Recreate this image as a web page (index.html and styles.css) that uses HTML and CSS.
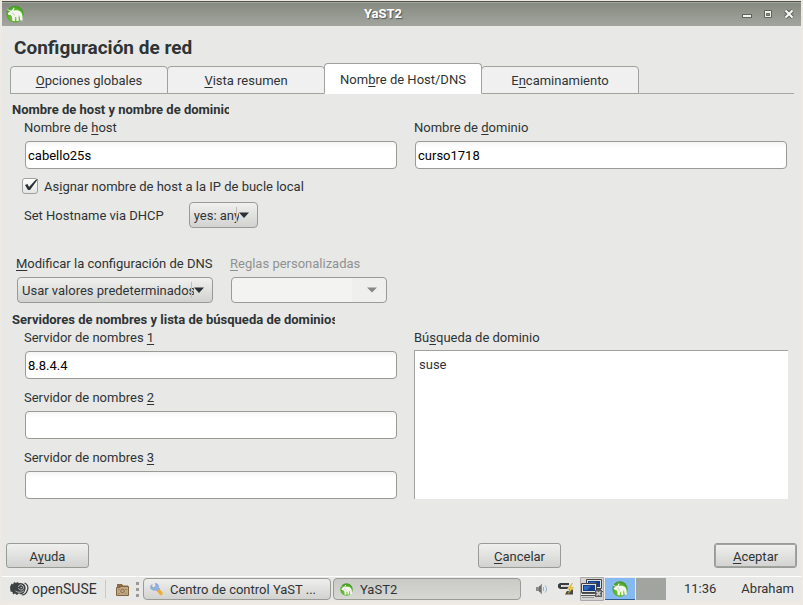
FILE: index.html
```
<!DOCTYPE html>
<html lang="es">
<head>
<meta charset="utf-8">
<title>YaST2</title>
<link rel="stylesheet" href="styles.css">
</head>
<body>
<svg class="defs" aria-hidden="true">
  <defs>
    <radialGradient id="green" cx="50%" cy="60%" r="55%">
      <stop offset="0" stop-color="#8fdc3c"/><stop offset=".65" stop-color="#5cb82a"/><stop offset="1" stop-color="#479a2b"/>
    </radialGradient>
    <symbol id="yast" viewBox="0 0 18 18">
      <circle cx="9" cy="9" r="8.600" fill="url(#green)"/>
      <path d="M1.500 4 4 5.500 6 5.300 7.600 2.500l.9.6-.9 2.600c2.500-.8 5.700-.5 7.600 1.500 1.200 1.500 1.500 4.500 1.300 8.300h-2.300l-.6-4-.9.200.1 4.300h-2.300l-.6-4-.9.100-.1 4H6.400L6 11.400 4.700 10 2.300 9.700 1.800 8l2.500-1.600L1.500 5z" fill="#f4f6ee"/>
      <path d="M6.500 7.500c.5 1.500 1.500 2.500 2.500 3M13 10.500v3M10 12.200v2" stroke="#a5b494" stroke-width=".7" fill="none"/>
    </symbol>
    <symbol id="pc" viewBox="0 0 17 13">
      <path d="M.5.500h15v9H.5z" fill="#e0e2e2" stroke="#444"/>
      <path d="M2 2h12v6H2z" fill="#153e88"/><path d="M3 3h7l-4 4H3z" fill="#2e69bd"/>
      <path d="M1 10.500h14M0 12.500h17" stroke="#555"/><path d="M0 11.500h17" stroke="#e8e8e8"/>
    </symbol>
  </defs>
</svg>
<div class="window">
  <header class="titlebar">
    <svg class="title-icon" aria-hidden="true"><use href="#yast"/></svg>
    <span class="title">YaST2</span>
    <div class="window-controls">
      <button type="button" aria-label="Minimizar"><svg width="10" height="10"><rect x=".5" y="5.500" width="9" height="3" fill="#f4f4f2" stroke="#5f635b"/></svg></button>
      <button type="button" aria-label="Maximizar"><svg width="10" height="10"><path d="M1.500 1.500h7v7h-7z" fill="#efefec" stroke="#5f635b"/><path d="M3.500 4.500h3v2h-3z" fill="#999c94" stroke="#5f635b"/></svg></button>
      <button type="button" aria-label="Cerrar"><svg width="10" height="10"><path d="m1.500 1.500 7 7m0-7-7 7" stroke="#5f635b" stroke-width="4"/><path d="m1.500 1.500 7 7m0-7-7 7" stroke="#fafaf8" stroke-width="2"/></svg></button>
    </div>
  </header>

  <main class="content">
    <h1>Configuración de red</h1>
    <nav class="tabs" role="tablist">
      <button type="button" role="tab"><span><u>O</u>pciones globales</span></button>
      <button type="button" role="tab"><span><u>V</u>ista resumen</span></button>
      <button type="button" role="tab" class="active" aria-selected="true"><span>Nom<u>b</u>re de Host/DNS</span></button>
      <button type="button" role="tab"><span>E<u>n</u>caminamiento</span></button>
    </nav>

    <section class="group">
      <h2 class="host-heading">Nombre de host y nombre de dominio</h2>
      <div class="columns">
        <div class="field">
          <label for="host">Nombre de <u>h</u>ost</label>
          <input id="host" type="text" value="cabello25s">
        </div>
        <div class="field">
          <label for="domain">Nombre de <u>d</u>ominio</label>
          <input id="domain" type="text" value="curso1718">
        </div>
      </div>
      <div class="check-row">
        <span class="check">
          <input id="loopback" type="checkbox" checked>
          <svg viewBox="0 0 16 16" aria-hidden="true"><path d="M3 7 5.500 6 7 9 13.500 2 16 1 8 12 6 12z" fill="#2b3134"/></svg>
        </span>
        <label for="loopback">As<u>i</u>gnar nombre de host a la IP de bucle local</label>
      </div>
      <div class="dhcp-row">
        <label for="dhcp">Set Hostname via DHCP</label>
        <span class="combo dhcp">
          <select id="dhcp"><option>yes: any</option></select>
          <svg viewBox="0 0 22 24" aria-hidden="true"><path d="M.5 4v16" stroke="#bdbdbb"/><path d="M3 9.500h10L8 15z" fill="#2b3134"/></svg>
        </span>
      </div>
    </section>

    <section class="dns-row">
      <div class="field">
        <label for="policy"><u>M</u>odificar la configuración de DNS</label>
        <span class="combo">
          <select id="policy"><option>Usar valores predeterminados</option></select>
          <svg viewBox="0 0 22 24" aria-hidden="true"><path d="M.5 4v16" stroke="#bdbdbb"/><path d="M3 9.500h10L8 15z" fill="#2b3134"/></svg>
        </span>
      </div>
      <div class="field disabled">
        <label for="rules"><u>R</u>eglas personalizadas</label>
        <span class="combo rules">
          <select id="rules" disabled><option></option></select>
          <svg viewBox="0 0 22 24" aria-hidden="true"><path d="M2 9.500h10L7 14.500z" fill="#858987"/></svg>
        </span>
      </div>
    </section>

    <section class="group">
      <h2 class="servers-heading">Servidores de nombres y lista de búsqueda de dominios</h2>
      <div class="columns">
        <div class="servers">
          <div class="field">
            <label for="ns1">Servidor de nombres <u>1</u></label>
            <input id="ns1" type="text" value="8.8.4.4">
          </div>
          <div class="field">
            <label for="ns2">Servidor de nombres <u>2</u></label>
            <input id="ns2" type="text">
          </div>
          <div class="field">
            <label for="ns3">Servidor de nombres <u>3</u></label>
            <input id="ns3" type="text">
          </div>
        </div>
        <div class="field search">
          <label for="search">Bú<u>s</u>queda de dominio</label>
          <textarea id="search">suse</textarea>
        </div>
      </div>
    </section>
  </main>

  <div class="actions">
    <button type="button"><span>A<u>y</u>uda</span></button>
    <button type="button"><span><u>C</u>ancelar</span></button>
    <button type="button" class="default"><span><u>A</u>ceptar</span></button>
  </div>

  <footer class="taskbar">
    <button type="button" class="launcher">
      <svg width="19" height="14" viewBox="0 0 19 14" aria-hidden="true">
        <path d="M0 5 1.500 1.500 3 2.500 4 0l2 1 1.500-1L9 1.200C12 .5 15 2 15.500 5S14 12 11 12.500L9 11.300 7 13 5 11.500 3 12.500 2.500 10 .5 9.500z" fill="#3c4244"/>
        <path d="M14.500 1c3 1 4 4 3 7S14.500 13 12 13" fill="none" stroke="#3c4244" stroke-width="1.200"/>
        <path d="M8.500 5c0-3 5-3 5 .5S9 8.500 8.500 6M5.500 9c3 2 7 1.500 8.500-.5M10.500 5.500h1.500" fill="none" stroke="#d7d8d7" stroke-width=".8"/>
      </svg>
      openSUSE
    </button>
    <button type="button" class="files" aria-label="Archivos">
      <svg width="13" height="13" viewBox="0 0 13 13" aria-hidden="true">
        <path d="M1 3V1h5l1 1.500h5V6H1z" fill="#8a6b43"/><path d="M.5 4.500H4l1-1h7.500v9H.5z" fill="#c0a982" stroke="#80643f"/>
        <circle cx="6.500" cy="8" r="1.800" fill="none" stroke="#87704d"/><path d="m2.500 6 1 1m7-1-1 1m-7 4 1-1m7 1-1-1" stroke="#87704d"/>
      </svg>
    </button>
    <svg class="grip" width="3" height="15" aria-hidden="true"><path d="M0 0h3v3H0zm0 6h3v3H0zm0 6h3v3H0z" fill="#999b98"/></svg>
    <button type="button" class="task">
      <svg width="13" height="13" viewBox="0 0 13 13" aria-hidden="true">
        <path d="M2 1.500v3h3L6 2l-1-1.500c3 0 4 2 3.500 4L10 6 7.500 8.500 6 7C3 8 0 6 .5 3.500z" fill="#93b1df" stroke="#7897c6" stroke-width=".5"/>
        <path d="m7 8 2.500-2 3 3.500c1 1.500-1 3.500-2.500 2.500z" fill="#f1aa32"/>
      </svg>
      <span>Centro de control YaST ...</span>
    </button>
    <button type="button" class="task pressed">
      <svg width="13" height="13" aria-hidden="true"><use href="#yast"/></svg>
      <span>YaST2</span>
    </button>
    <div class="tray">
      <svg width="12" height="12" viewBox="0 0 12 12" aria-label="Volumen"><path d="M0 4h2.500L6 .5v11L2.500 8H0z" fill="#8a8d8c"/><path d="M4 3v6" stroke="#555"/><path d="M7.500 4v4M9 2.500c2 2 2 5 0 7" fill="none" stroke="#91b1d2"/></svg>
      <svg width="16" height="14" viewBox="0 0 16 14" aria-label="Batería"><path d="M11 1H2L0 2.500v3L2 7h8V5H3V3h8z" fill="#393d3d"/><path d="M4 3.500h7v1.200H4z" fill="#c4c5c3"/><path d="M7 12.500h8V8l-3-3-1 4H9z" fill="#454846"/><path d="M14.500 1 9 7h3l-2 5 5.500-6.500h-3z" fill="#f9d438" stroke="#b78d1b" stroke-width=".4"/></svg>
      <svg class="network" width="24" height="24" viewBox="0 0 24 24" aria-label="Red">
        <path d="M.5.500h23v23H.5z" fill="#d2d3d2" stroke="#aaa"/>
        <use href="#pc" x="6" y="2" width="17" height="13"/><use href="#pc" x="1" y="6" width="17" height="13"/>
        <path d="M2 20.500h12" stroke="#999"/><path d="M15 13h7v7h-7z" fill="#5d5f60"/><path d="m16.500 14.500 4 4m0-4-4 4" stroke="#d5d5d5" stroke-width="1.500"/>
      </svg>
    </div>
    <div class="pager">
      <button type="button" class="desk current" aria-label="Escritorio 1"><svg width="16" height="16" aria-hidden="true"><use href="#yast"/></svg></button>
      <button type="button" class="desk" aria-label="Escritorio 2"></button>
    </div>
    <time>11:36</time>
    <span class="user">Abraham</span>
  </footer>
</div>
</body>
</html>
```
FILE: styles.css
```
* { box-sizing: border-box; }

body {
  margin: 0;
  padding: 2px 2px 4px;
  min-height: 100vh;
  display: flex;
  background: #eeeae3;
  color: #2e3436;
  font: 13px/16px Roboto, "Liberation Sans", sans-serif;
}

button, input, select, textarea { font: inherit; color: inherit; margin: 0; }
button { padding: 2px 0 0; }
u { text-decoration-skip-ink: none; text-underline-offset: 2px; text-decoration-thickness: 1px; }
.defs { position: absolute; width: 0; height: 0; }

.window {
  flex: 1;
  min-width: 0;
  display: flex;
  flex-direction: column;
  background: #e8e8e6;
}

/* Title bar */
.titlebar {
  display: grid;
  grid-template-columns: auto 1fr auto;
  align-items: center;
  height: 24px;
  padding: 0 7px 0 4px;
  background: linear-gradient(#858a80, #a2a59e);
  box-shadow: 0 -1px #4f5349, inset 0 1px #a4a79d;
}
.title-icon { width: 18px; height: 18px; }
.title { color: #fff; font-weight: 700; text-align: center; text-shadow: 1px 1px 1px #50544c; }
.window-controls { display: flex; gap: 11px; }
.window-controls button { width: 10px; height: 10px; padding: 0; border: 0; background: none; display: flex; }

/* Content */
.content { flex: 1; padding: 10px 7px 0 8px; }
h1 { margin: 0 4px; font-size: 19px; line-height: 24px; font-weight: 700; }
h2 { margin: 0 2px; font-size: 13px; line-height: 16px; font-weight: 700; white-space: nowrap; overflow: hidden; }
.host-heading { width: 217px; }
.servers-heading { width: 323px; }

.tabs {
  display: flex;
  align-items: flex-end;
  height: 34px;
  margin-bottom: 8px;
  border-bottom: 1px solid #a6a8a4;
}
.tabs button {
  flex: 0 1 158px;
  height: 28px;
  margin: 0 -1px -1px 0;
  border: 1px solid #a0a29e;
  border-radius: 4px 4px 0 0;
  background: #f0f0f0;
}
.tabs .active { height: 31px; background: #fff; border-bottom-color: #fff; z-index: 1; }

.columns { display: grid; grid-template-columns: 1fr 1fr; gap: 16px; margin: 2px 6px 0 14px; }
.field { display: flex; flex-direction: column; gap: 5px; }
.field input {
  height: 28px;
  margin: 0 1px;
  padding: 0 2px;
  border: 1px solid #999b95;
  border-radius: 4px;
  background: linear-gradient(#f5f5f5, #fff 6px);
  color: #000;
}
.servers { display: flex; flex-direction: column; gap: 11px; }
.search { gap: 4px; }
textarea {
  flex: 1;
  width: 100%;
  padding: 6px 4px;
  border: solid #a0a29e;
  border-width: 1px 0 0 1px;
  background: #fff;
  resize: none;
}

.check-row { display: flex; align-items: center; gap: 6px; margin: 8px 12px 0; }
.check-row label, .dhcp-row label { padding-top: 2px; }
.check { display: grid; width: 16px; height: 16px; }
.check > * { grid-area: 1 / 1; width: 16px; height: 16px; }
.check svg { pointer-events: none; }
.check input {
  appearance: none;
  border: 1px solid #a0a29e;
  border-radius: 3px;
  background: linear-gradient(#fff, #e4e4e3);
}
.dhcp-row { display: flex; align-items: center; gap: 25px; margin: 7px 14px 0; }

.combo { display: grid; height: 26px; }
.combo > * { grid-area: 1 / 1; }
.combo svg { justify-self: end; align-self: center; width: 22px; height: 24px; pointer-events: none; }
.combo select {
  appearance: none;
  width: 100%;
  height: 26px;
  padding: 2px 18px 0 4px;
  border: 1px solid #999b95;
  border-radius: 4px;
  background: linear-gradient(#f0f0ef, #d2d2d0);
}
.dhcp { width: 69px; }
.combo.rules select { background: linear-gradient(90deg, #f3f3f1 78%, #efefee 78%); opacity: 1; }
.disabled { color: #8f9292; }
.dns-row { display: flex; gap: 17px; margin: 28px 6px 9px; }
.dns-row .field:not(.disabled) .combo { width: 196px; margin-left: 1px; }
.dns-row .rules { width: 156px; margin-left: 1px; }
.dns-row label { white-space: nowrap; }
.dns-row .field { width: 197px; }

/* Dialog buttons */
.actions { display: grid; grid-template-columns: 2fr 1fr auto; margin: 0 4px 8px; }
.actions button {
  width: 83px;
  height: 25px;
  border: 1px solid #999b95;
  border-radius: 3px;
  background: linear-gradient(#f0f0ef, #d2d2d0);
}
.actions .default { box-shadow: inset 0 0 0 1px #a2a39f; }

/* Taskbar */
.taskbar {
  display: flex;
  align-items: center;
  height: 25px;
  padding-right: 7px;
  border-top: 1px solid #fff;
  white-space: nowrap;
}
.launcher {
  display: flex;
  align-items: center;
  gap: 3px;
  width: 104px;
  height: 18px;
  padding: 0 0 0 8px;
  border: 0;
  border-right: 1px solid #c9cac7;
  background: none;
  font-size: 14px;
}
.files { display: flex; margin: 0 7px 0 10px; padding: 0; border: 0; background: none; }
.grip { margin-right: 4px; }
.task {
  flex: 0 1 188px;
  display: flex;
  align-items: center;
  gap: 7px;
  height: 22px;
  margin-right: 2px;
  padding: 0 6px;
  border: 1px solid #999b95;
  border-radius: 4px;
  background: linear-gradient(#eeeeec, #d2d2d0);
}
.task svg { flex: none; }
.task span { padding-top: 1px; }
.pressed { background: linear-gradient(#c9cac5, #d7d8d3); }
.tray { display: flex; align-items: center; gap: 10px; margin-left: 13px; }
.network { margin-left: -4px; }
.pager { display: flex; gap: 1px; margin-left: 1px; }
.desk { width: 30px; height: 22px; padding: 0; border: 0; background: #a2a49f; display: flex; align-items: center; justify-content: center; }
.current { background: #86b8f2; border-bottom: 1px solid #315d8e; }
time { margin-left: auto; }
.user { margin-left: 25px; }
```
